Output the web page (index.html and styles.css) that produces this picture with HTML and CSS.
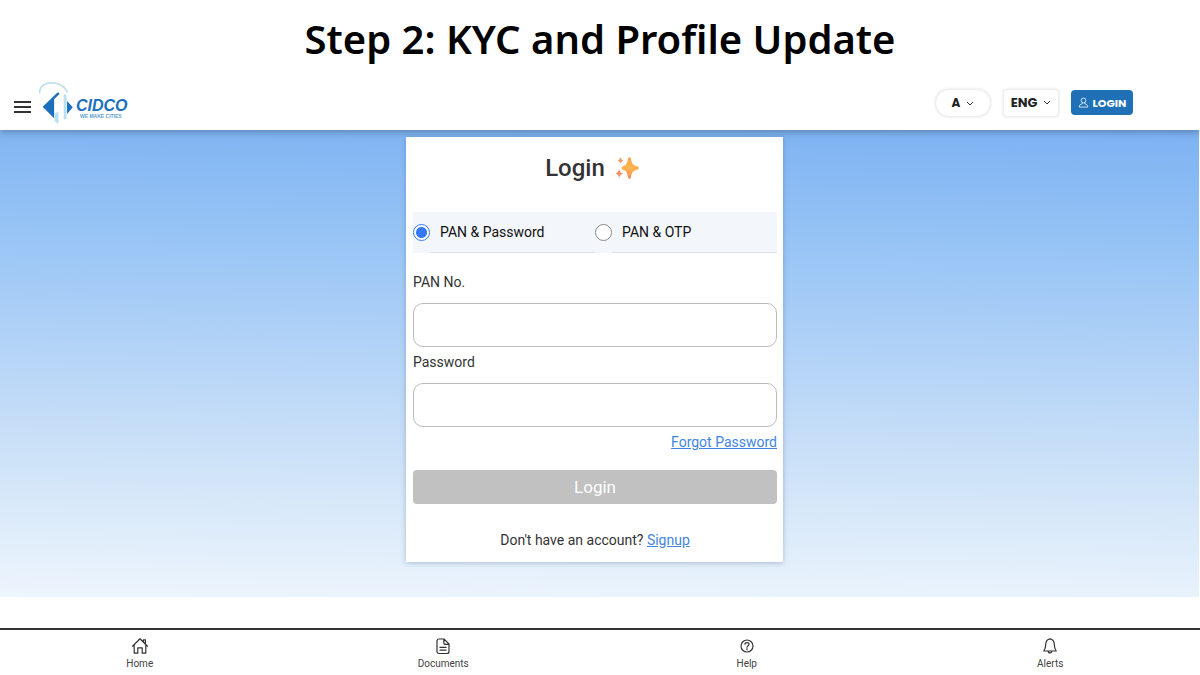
FILE: index.html
```html
<!DOCTYPE html>
<html lang="en">
<head>
<meta charset="utf-8">
<meta name="viewport" content="width=device-width, initial-scale=1">
<title>CIDCO Login</title>
<link rel="stylesheet" href="styles.css">
</head>
<body>
<h1 class="step-title">Step 2: KYC and Profile Update</h1>
<header class="topbar">
  <button class="menu-btn" type="button" aria-label="Menu"><span></span><span></span><span></span></button>
  <a class="brand" href="#" aria-label="CIDCO">
    <svg class="brand-mark" viewBox="0 0 38 46" aria-hidden="true">
      <path d="M1 13C0 5 8 1 16 2c7 1 12 5 14 10" fill="none" stroke="#b9dcee" stroke-width="1.6"/>
      <path d="M4 27 19 12.500c1-1 2.500-.6 2.500 1L16 19v20L4 27Z" fill="#1c6fbd"/>
      <path d="M26 13l3 2v25h-3z" fill="#b9e0f1"/>
      <path d="M16.500 34l4-2v13l-4-3z" fill="#b9e0f1"/>
      <path d="M29.500 21l6 6.500-6 7z" fill="#1c6fbd"/>
    </svg>
    <span class="brand-text"><span class="brand-name">CIDCO</span><span class="brand-tag">WE MAKE CITIES</span></span>
  </a>
  <div class="tools">
    <button class="tool tool-round" type="button">A
      <svg class="chev" viewBox="0 0 8 8" aria-hidden="true"><path d="m1 3 3 3 3-3"/></svg></button>
    <button class="tool tool-lang" type="button">ENG
      <svg class="chev" viewBox="0 0 8 8" aria-hidden="true"><path d="m1 2 3 3 3-3"/></svg></button>
    <button class="tool-login" type="button">
      <svg class="user" viewBox="0 0 12 12" aria-hidden="true"><circle cx="6" cy="3.8" r="2.6"/><path d="M4.6 6.2v1.2C2.400 8 1.300 9 1.300 11h9.400c0-2-1.100-3-3.300-3.600V6.200"/></svg>LOGIN</button>
  </div>
</header>
<main class="stage">
  <form class="card">
    <h2 class="card-title">Login
      <svg class="sparkles" viewBox="0 0 24 24" aria-hidden="true">
        <defs><linearGradient id="glow" x1="0" y1="0" x2="0" y2="1"><stop offset="0" stop-color="#f9a348"/><stop offset=".5" stop-color="#fbb650"/><stop offset="1" stop-color="#f68a5c"/></linearGradient></defs>
        <path fill="url(#glow)" d="M14.500 1c.8 0 1.200.7 1.500 2 1 4.800 1.800 6 6 7.300 1.300.4 2 .9 2 1.700s-.7 1.300-2 1.700c-4.200 1.300-5 2.500-6 7.300-.3 1.300-.7 2-1.500 2s-1.200-.7-1.500-2c-1-4.800-1.800-6-5-7.300-1-.4-1.500-.9-1.500-1.700s.5-1.300 1.500-1.700c3.200-1.300 4-2.500 5-7.300.3-1.300.7-2 1.500-2Z"/>
        <path fill="#f5975b" d="M5.500 1c.6 2.200 1.100 2.800 3 3.500-1.900.7-2.400 1.300-3 3.500-.6-2.200-1.100-2.800-3-3.500 1.900-.7 2.400-1.300 3-3.500Z"/>
        <path fill="#f58f5b" d="M4.200 13c.8 3 1.400 3.800 4 4.600-2.600.8-3.200 1.600-4 4.600-.8-3-1.400-3.800-4-4.600 2.600-.8 3.200-1.600 4-4.600Z"/>
      </svg>
    </h2>
    <div class="modes" role="radiogroup" aria-label="Login method">
      <label class="mode"><input type="radio" name="mode" checked><span class="mode-text">PAN &amp; Password</span></label>
      <label class="mode"><input type="radio" name="mode"><span class="mode-text">PAN &amp; OTP</span></label>
    </div>
    <label class="field-label" for="pan">PAN No.</label>
    <input class="field" id="pan" type="text">
    <label class="field-label" for="password">Password</label>
    <input class="field" id="password" type="password">
    <a class="link forgot" href="#">Forgot Password</a>
    <button class="submit" type="submit" disabled>Login</button>
    <p class="signup">Don't have an account? <a class="link" href="#">Signup</a></p>
  </form>
</main>
<nav class="tabs">
  <a class="tab" href="#">
    <svg viewBox="0 0 18 18" aria-hidden="true"><path d="M1.500 9.200 9 1.800l7.500 7.400M3.200 7.800v8.400h3.600v-5.400h4.400v5.400h3.600V7.800M12.400 5V2.800h2v4"/></svg>Home</a>
  <a class="tab" href="#">
    <svg viewBox="0 0 18 18" aria-hidden="true"><path d="M5 2h5l5 5v7.500a2 2 0 0 1-2 2H5a2 2 0 0 1-2-2V4a2 2 0 0 1 2-2ZM9.800 2v3.400a2 2 0 0 0 2 2H15M6 10.400h6M6 13.200h6"/></svg>Documents</a>
  <a class="tab" href="#">
    <svg viewBox="0 0 18 18" aria-hidden="true"><circle cx="9" cy="9" r="6"/><path d="M7 7.300C7 5 11 5 11 7.300c0 1.400-2 1.400-2 2.900M9 11.600v1.200"/></svg>Help</a>
  <a class="tab" href="#">
    <svg viewBox="0 0 18 18" aria-hidden="true"><path d="M9 1.800C6 2.300 4.800 4.400 4.700 7.500c0 3-.6 4.500-1.900 6.500h12.400c-1.300-2-1.900-3.500-1.900-6.500C13.200 4.400 12 2.300 9 1.800ZM7.200 14c0 2.600 3.600 2.600 3.600 0"/></svg>Alerts</a>
</nav>
</body>
</html>
```
FILE: styles.css
```css
* { box-sizing: border-box; }
body {
  margin: 0;
  min-height: 100vh;
  display: flex;
  flex-direction: column;
  overflow-x: hidden;
  background: #fff;
  color: #333;
  font-family: Roboto, sans-serif;
  font-size: 14px;
}
button, input { font: inherit; }
.step-title {
  margin: 0;
  padding: 15px 0 17px;
  color: #000;
  font: 600 40px/48px "Noto Sans", sans-serif;
  text-align: center;
}
.topbar {
  position: relative;
  display: flex;
  align-items: center;
  height: 50px;
  padding: 0 67px 0 14px;
  background: #fff;
  box-shadow: 0 1px 8px rgba(40, 60, 90, .5);
  clip-path: inset(0 0 -12px 0);
}
.menu-btn {
  display: grid;
  gap: 3px;
  padding: 3px 0 0;
  border: 0;
  background: none;
}
.menu-btn span { width: 17px; height: 2px; background: #333; }
.brand {
  display: flex;
  align-items: center;
  margin-left: 7px;
  padding-bottom: 5px;
  color: #1c6fbd;
  text-decoration: none;
}
.brand-mark { width: 38px; height: 44px; }
.brand-text { display: grid; padding-top: 12px; }
.brand-name { font: italic 700 16px/16px "Liberation Sans", sans-serif; }
.brand-tag { padding-left: 4px; color: #5e9fd0; font: 700 5px/5px "Liberation Sans", sans-serif; }
.tools { display: flex; align-items: center; gap: 12px; margin: -5px 0 0 auto; }
.tool {
  display: flex;
  align-items: center;
  justify-content: center;
  gap: 6px;
  width: 56px;
  height: 28px;
  padding: 0;
  border: 1px solid #eee;
  border-radius: 4px;
  background: #fff;
  box-shadow: 0 0 3px rgba(0, 0, 0, .12);
  color: #222;
  font: 700 13px/16px Poppins, Inter, sans-serif;
}
.tool-round { border-radius: 14px; font-size: 12px; }
.chev { width: 8px; height: 8px; fill: none; stroke: #333; }
.tool-login {
  display: flex;
  align-items: center;
  justify-content: center;
  gap: 4px;
  width: 62px;
  height: 25px;
  padding: 0;
  border: 0;
  border-radius: 4px;
  background: #2070b8;
  color: #fff;
  font: 700 11px/16px Poppins, Inter, sans-serif;
}
.user { width: 11px; height: 11px; fill: none; stroke: #dcecfa; }
.stage {
  display: flex;
  justify-content: center;
  align-items: flex-start;
  margin-right: 1px;
  padding: 7px 10px 35px 0;
  background: linear-gradient(181deg, #7db2f2 0%, #97c4f5 25%, #b5d4f7 50%, #d2e5f8 75%, #edf5fd 100%);
}
.card {
  display: flex;
  flex-direction: column;
  width: 377px;
  padding: 15px 6px 12px 7px;
  background: #fff;
  box-shadow: 0 1px 5px rgba(60, 90, 140, .35);
}
.card-title {
  display: flex;
  align-items: center;
  justify-content: center;
  gap: 10px;
  margin: 0 0 28px;
  padding-right: 6px;
  font-size: 24px;
  font-weight: 500;
  line-height: 32px;
}
.sparkles { width: 24px; height: 24px; }
.modes {
  display: grid;
  grid-template-columns: 1fr 1fr;
  margin-bottom: 20px;
  background: #f3f6fa;
  color: #111;
}
.mode { display: flex; align-items: center; height: 41px; }
.mode input {
  appearance: none;
  width: 17px;
  height: 17px;
  margin: 0;
  border: 1px solid #888;
  border-radius: 50%;
  background: #fff;
}
.mode input:checked {
  border-color: #3478f6;
  background: radial-gradient(circle, #3478f6 5px, #fff 6px);
}
.mode-text { flex: 1; padding-left: 10px; border-bottom: 1px solid #dce0e5; line-height: 40px; }
.field-label { line-height: 18px; }
.field {
  width: 100%;
  height: 44px;
  margin: 12px 0 6px;
  padding: 0 12px;
  border: 1px solid #bbb;
  border-radius: 10px;
  background: #fff;
}
.link { color: #4285e0; text-decoration: underline; }
.forgot { align-self: flex-end; line-height: 18px; }
.submit {
  height: 34px;
  margin: 19px 0 26px;
  border: 0;
  border-radius: 4px;
  background: #c1c1c1;
  color: #fff;
  font-size: 17px;
}
.signup { margin: 0; line-height: 20px; text-align: center; }
.tabs {
  display: grid;
  grid-template-columns: repeat(4, 1fr);
  margin: 31px -2px 0 -12px;
  padding-top: 7px;
  border-top: 2px solid #333;
}
.tab {
  display: grid;
  justify-items: center;
  gap: 2px;
  color: #444;
  font-size: 10px;
  line-height: 14px;
  text-decoration: none;
}
.tab svg { width: 18px; height: 18px; fill: none; stroke: #333; stroke-width: 1.2; stroke-linejoin: round; stroke-linecap: round; }
```
